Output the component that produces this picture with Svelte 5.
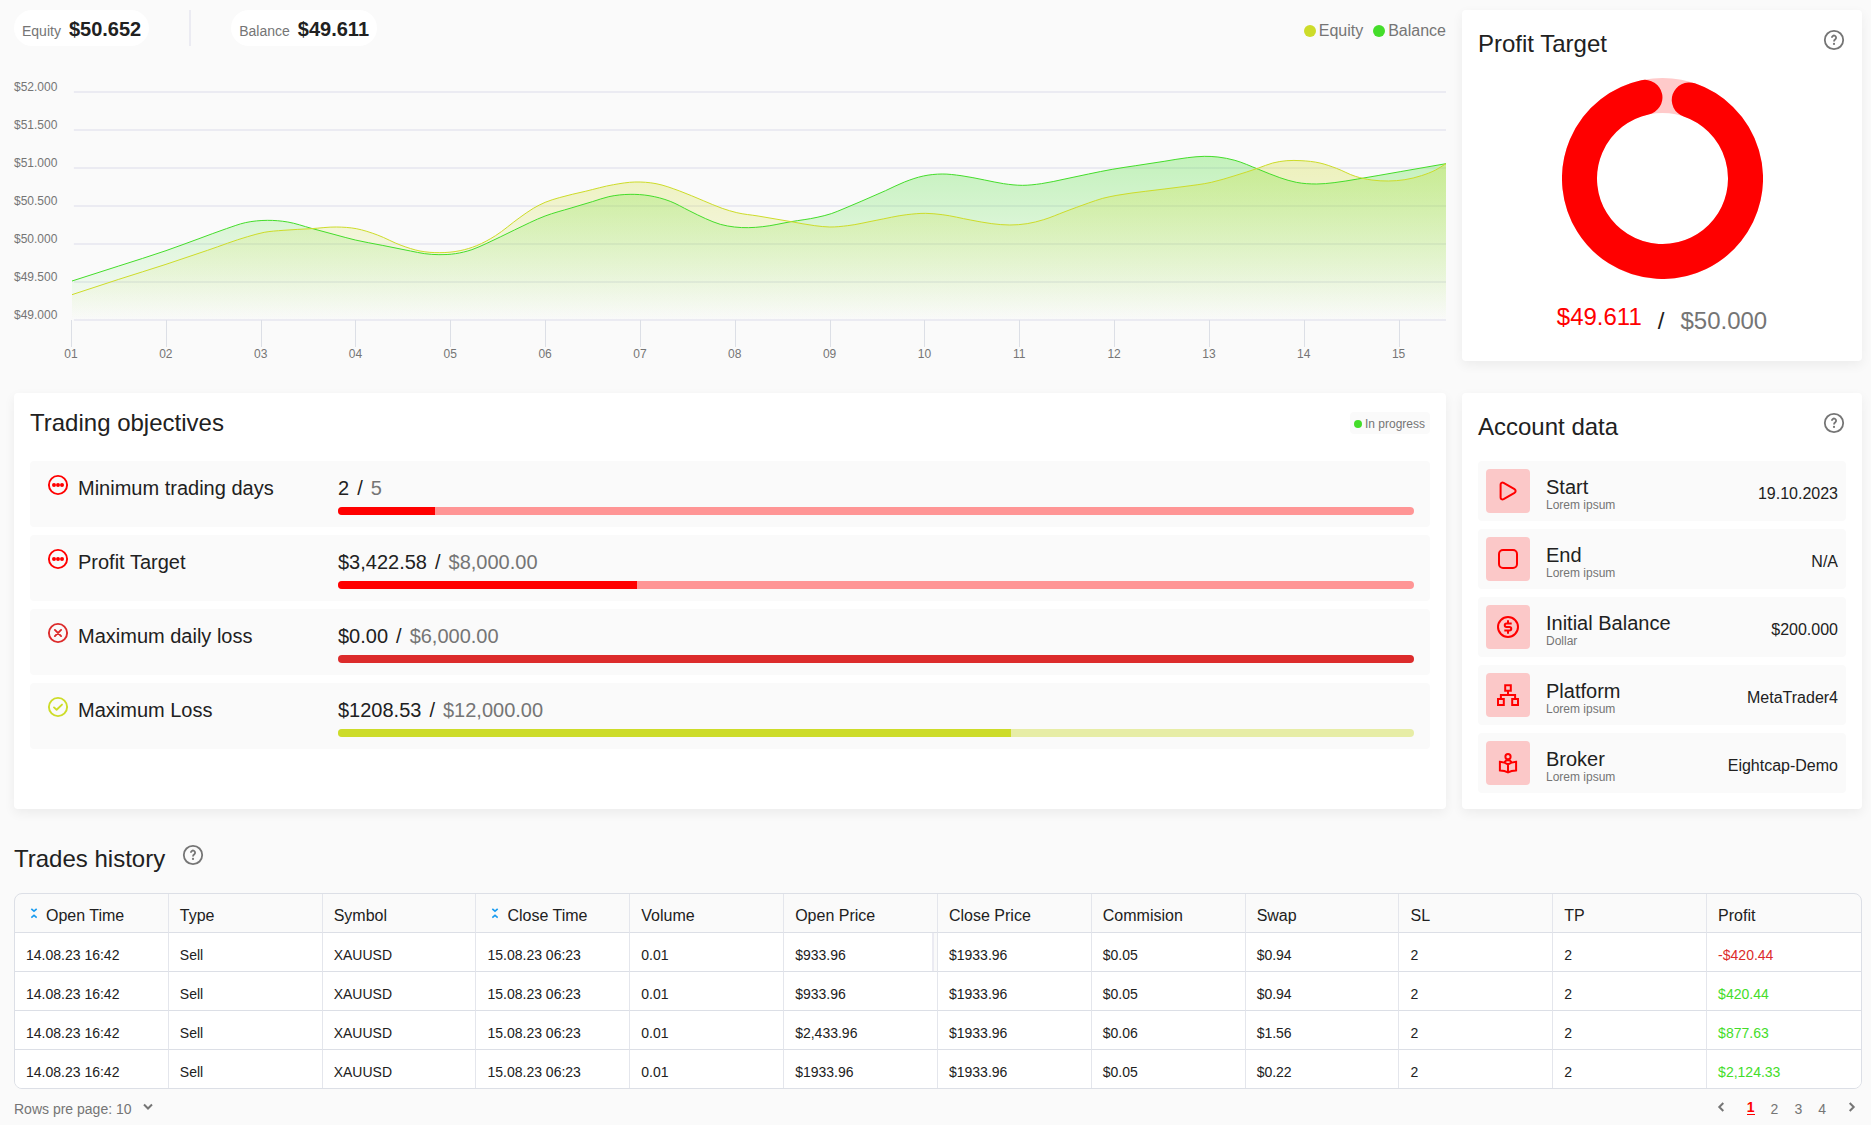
<script lang="ts">
  type Point = [number, number];

  const yLabels = ['$52.000', '$51.500', '$51.000', '$50.500', '$50.000', '$49.500', '$49.000'];
  const days = Array.from({ length: 15 }, (_, i) => String(i + 1).padStart(2, '0'));

  const balance: Point[] = [
    [153, 843], [252, 798], [352, 752], [420, 717], [480, 686], [520, 668], [567, 661], [610, 666],
    [660, 685], [710, 704], [753, 720], [810, 736], [870, 753], [900, 761], [930, 764], [965, 761],
    [1000, 749], [1030, 731], [1090, 690], [1155, 648], [1210, 624], [1255, 605], [1290, 590],
    [1335, 583], [1375, 587], [1420, 604], [1460, 632], [1495, 656], [1526, 673], [1556, 681],
    [1586, 683], [1616, 680], [1676, 665], [1731, 652], [1761, 641], [1786, 627], [1826, 603],
    [1876, 572], [1916, 546], [1956, 528], [1996, 522], [2036, 527], [2086, 540], [2126, 551],
    [2166, 556], [2206, 551], [2256, 537], [2306, 522], [2356, 508], [2406, 497], [2466, 484],
    [2516, 473], [2551, 469], [2580, 471], [2616, 481], [2666, 508], [2711, 533], [2746, 547],
    [2789, 552], [2826, 548], [2876, 537], [2966, 515], [3063, 491]
  ];

  const equity: Point[] = [
    [153, 884], [252, 838], [352, 793], [440, 751], [525, 710], [560, 697], [600, 691], [660, 686],
    [713, 681], [755, 686], [800, 705], [850, 736], [890, 753], [932, 758], [975, 752], [1010, 737],
    [1050, 707], [1100, 654], [1130, 625], [1155, 607], [1185, 593], [1240, 574], [1300, 554],
    [1345, 546], [1390, 551], [1440, 573], [1490, 602], [1530, 625], [1561, 638], [1606, 648],
    [1676, 665], [1726, 677], [1758, 681], [1796, 677], [1856, 661], [1921, 644], [1961, 640],
    [1996, 644], [2056, 660], [2101, 671], [2139, 675], [2176, 671], [2211, 659], [2256, 635],
    [2306, 609], [2336, 595], [2366, 586], [2426, 574], [2506, 560], [2566, 547], [2616, 527],
    [2666, 504], [2696, 489], [2726, 482], [2756, 482], [2796, 489], [2831, 505], [2871, 529],
    [2906, 540], [2941, 543], [2976, 539], [3011, 527], [3041, 510], [3063, 491]
  ];

  // Cubic segments whose tangents are weighted by the spacing of neighbouring points
  function curve(points: Point[]): string {
    const last = points.length - 1;
    const slope = (i: number) => (points[i + 1][1] - points[i][1]) / (points[i + 1][0] - points[i][0]);
    const tangents = points.map((p, i) => {
      if (i === 0) return slope(0);
      if (i === last) return slope(last - 1);
      const before = p[0] - points[i - 1][0];
      const after = points[i + 1][0] - p[0];
      return (slope(i - 1) * after + slope(i) * before) / (before + after);
    });
    let d = `M${points[0][0]} ${points[0][1]}`;
    for (let i = 0; i < last; i++) {
      const [x1, y1] = points[i];
      const [x2, y2] = points[i + 1];
      const h = (x2 - x1) / 3;
      d += `C${x1 + h} ${y1 + h * tangents[i]} ${x2 - h} ${y2 - h * tangents[i + 1]} ${x2} ${y2}`;
    }
    return d;
  }

  const balanceLine = curve(balance);
  const equityLine = curve(equity);

  // Profit ring: angles run clockwise from the top
  const at = (deg: number) => {
    const a = (deg * Math.PI) / 180;
    return `${100.5 + 83 * Math.sin(a)} ${100.5 - 83 * Math.cos(a)}`;
  };
  const ring = `M${at(18.8)}A83 83 0 1 1 ${at(347.8)}`;

  const objectives = [
    { icon: 'dots', name: 'Minimum trading days', value: '2', target: '5', pct: 9, tone: 'red' },
    { icon: 'dots', name: 'Profit Target', value: '$3,422.58', target: '$8,000.00', pct: 27.8, tone: 'red' },
    { icon: 'cross', name: 'Maximum daily loss', value: '$0.00', target: '$6,000.00', pct: 100, tone: 'fail' },
    { icon: 'check', name: 'Maximum Loss', value: '$1208.53', target: '$12,000.00', pct: 62.5, tone: 'lime' }
  ];

  const account = [
    { icon: 'play', name: 'Start', note: 'Lorem ipsum', value: '19.10.2023' },
    { icon: 'stop', name: 'End', note: 'Lorem ipsum', value: 'N/A' },
    { icon: 'dollar', name: 'Initial Balance', note: 'Dollar', value: '$200.000' },
    { icon: 'tree', name: 'Platform', note: 'Lorem ipsum', value: 'MetaTrader4' },
    { icon: 'reader', name: 'Broker', note: 'Lorem ipsum', value: 'Eightcap-Demo' }
  ];

  const columns = ['Open Time', 'Type', 'Symbol', 'Close Time', 'Volume', 'Open Price', 'Close Price', 'Commision', 'Swap', 'SL', 'TP', 'Profit'];
  const sortable = ['Open Time', 'Close Time'];
  const trades = [
    ['14.08.23 16:42', 'Sell', 'XAUUSD', '15.08.23 06:23', '0.01', '$933.96', '$1933.96', '$0.05', '$0.94', '2', '2', '-$420.44'],
    ['14.08.23 16:42', 'Sell', 'XAUUSD', '15.08.23 06:23', '0.01', '$933.96', '$1933.96', '$0.05', '$0.94', '2', '2', '$420.44'],
    ['14.08.23 16:42', 'Sell', 'XAUUSD', '15.08.23 06:23', '0.01', '$2,433.96', '$1933.96', '$0.06', '$1.56', '2', '2', '$877.63'],
    ['14.08.23 16:42', 'Sell', 'XAUUSD', '15.08.23 06:23', '0.01', '$1933.96', '$1933.96', '$0.05', '$0.22', '2', '2', '$2,124.33']
  ];
  const pages = [1, 2, 3, 4];
  let page = $state(1);
</script>

{#snippet help(label: string)}
  <button class="help" type="button" aria-label={label}>
    <svg viewBox="0 0 24 24" width="24" height="24" fill="none" stroke="currentColor" stroke-width="1.8">
      <circle cx="12" cy="12" r="9.2" />
      <path d="M9.9 9.7a2.100 2.100 0 1 1 3.400 1.600c-.8.6-1.300 1-1.300 2.100" />
      <circle cx="12" cy="15.900" r="1.100" fill="currentColor" stroke="none" />
    </svg>
  </button>
{/snippet}

<main>
  <div class="panels">
    <section class="chart" aria-label="Equity and balance">
      <header class="summary">
        <div class="pill"><span>Equity</span><strong>$50.652</strong></div>
        <div class="divider"></div>
        <div class="pill"><span>Balance</span><strong>$49.611</strong></div>
        <ul class="legend">
          <li class="equity">Equity</li>
          <li class="balance">Balance</li>
        </ul>
      </header>
      <div class="graph">
        <ul class="y-axis">
          {#each yLabels as label}<li>{label}</li>{/each}
        </ul>
        <div class="plot">
          <svg viewBox="153 276 2910 684" preserveAspectRatio="none" fill="none" aria-hidden="true">
            <defs>
              <linearGradient id="balance-fill" x1="0" y1="0" x2="0" y2="1">
                <stop offset="0" stop-color="#44dd2a" stop-opacity=".3" />
                <stop offset="1" stop-color="#44dd2a" stop-opacity="0" />
              </linearGradient>
              <linearGradient id="equity-fill" x1="0" y1="0" x2="0" y2="1">
                <stop offset="0" stop-color="#cddc29" stop-opacity=".3" />
                <stop offset="1" stop-color="#cddc29" stop-opacity="0" />
              </linearGradient>
            </defs>
            {#each yLabels as _, i}
              <line class="gridline" x1="157" x2="3063" y1={276 + i * 114} y2={276 + i * 114} />
            {/each}
            <path d="{balanceLine}V960H153Z" fill="url(#balance-fill)" />
            <path d="{equityLine}V960H153Z" fill="url(#equity-fill)" />
            <path class="line" d={balanceLine} stroke="#44dd2a" />
            <path class="line" d={equityLine} stroke="#cddc29" />
          </svg>
          <ul class="x-axis">
            {#each days as day}<li><span>{day}</span></li>{/each}
          </ul>
        </div>
      </div>
    </section>

    <section class="card profit">
      <header class="head">
        <h2>Profit Target</h2>
        {@render help('About profit target')}
      </header>
      <svg class="ring" viewBox="0 0 201 201" width="201" height="201" fill="none" stroke-width="35" aria-hidden="true">
        <circle cx="100.5" cy="100.5" r="83" stroke="#ffcaca" />
        <path d={ring} stroke="#ff0000" stroke-linecap="round" />
      </svg>
      <p class="totals"><span class="current">$49.611</span><span class="low">/</span><span class="low goal">$50.000</span></p>
    </section>

    <section class="card">
      <header class="head raised">
        <h2>Trading objectives</h2>
        <span class="badge">In progress</span>
      </header>
      <ul class="objectives">
        {#each objectives as item}
          <li class={item.tone}>
            <svg viewBox="0 0 24 24" width="24" height="24" fill="none" stroke="currentColor" stroke-width="1.9" stroke-linecap="round" stroke-linejoin="round" aria-hidden="true">
              <circle cx="12" cy="12" r="9.1" />
              {#if item.icon === 'dots'}
                <g fill="currentColor" stroke="none">
                  <circle cx="8" cy="12" r="2" /><circle cx="12" cy="12" r="2" /><circle cx="16" cy="12" r="2" />
                </g>
              {:else if item.icon === 'cross'}
                <path d="M8.900 8.900l6.200 6.200M15.100 8.900l-6.200 6.200" />
              {:else}
                <path d="M8 12.400l2.600 2.400 5.400-5.200" />
              {/if}
            </svg>
            <span class="name">{item.name}</span>
            <div class="progress">
              <p><span>{item.value}</span><span>/</span><span class="target">{item.target}</span></p>
              <div class="bar" role="progressbar" aria-label={item.name} aria-valuenow={item.pct}>
                <div class="fill" style="width: {item.pct}%"></div>
              </div>
            </div>
          </li>
        {/each}
      </ul>
    </section>

    <section class="card">
      <header class="head">
        <h2>Account data</h2>
        {@render help('About account data')}
      </header>
      <ul class="account">
        {#each account as item}
          <li>
            <span class="tile">
              <svg viewBox="0 0 24 24" width="24" height="24" fill="none" stroke="currentColor" stroke-width="2" aria-hidden="true">
                {#if item.icon === 'play'}
                  <path d="M4.600 5.600v12.800c0 1.800 1.500 2.500 3 1.700l10.900-6.200c1.500-.9 1.500-2.900 0-3.800L7.600 3.900c-1.500-.8-3-.1-3 1.700z" />
                {:else if item.icon === 'stop'}
                  <rect x="3" y="3" width="18" height="18" rx="4" />
                {:else if item.icon === 'dollar'}
                  <circle cx="12" cy="12" r="10" />
                  <path d="M15.700 8.500h-5.200a1.700 1.700 0 0 0 0 3.500h3a1.700 1.700 0 0 1 0 3.500H8.300M12 5.200v3.300M12 15.500v3.300" />
                {:else if item.icon === 'tree'}
                  <path d="M9.200 2.200h5.600v5.600H9.200zM2 16h5.800v6H2zM16.200 16H22v6h-5.800zM12 7.800v4M4.900 16v-4h14.200v4" />
                {:else}
                  <circle cx="12" cy="5.700" r="2.600" />
                  <path d="M12 13.400C9.800 11.700 7 10.900 3.900 10.700v8.700c3 .1 5.800.7 8.100 2 2.300-1.300 5.100-1.900 8.100-2v-8.700c-3.100.2-5.900 1-8.100 2.700zM12 13.400v8M8.700 10.900c1.200-2.100 5.400-2.100 6.600 0" />
                {/if}
              </svg>
            </span>
            <div class="text">
              <span class="title">{item.name}</span>
              <span class="note">{item.note}</span>
            </div>
            <span class="value">{item.value}</span>
          </li>
        {/each}
      </ul>
    </section>
  </div>

  <section class="history">
    <header class="history-head">
      <h2>Trades history</h2>
      {@render help('About trades history')}
    </header>
    <div class="table-box">
      <table>
        <thead>
          <tr>
            {#each columns as column}
              <th scope="col">
                {#if sortable.includes(column)}
                  <button class="sort" type="button">
                    <svg viewBox="0 0 16 16" width="16" height="16" fill="none" stroke="#1a9cf0" stroke-width="1.6" aria-hidden="true">
                      <path d="M5.300 3.800L8 6.200l2.700-2.400M5.300 12.700L8 10.300l2.700 2.400" />
                    </svg>
                    <span>{column}</span>
                  </button>
                {:else}
                  <span>{column}</span>
                {/if}
              </th>
            {/each}
          </tr>
        </thead>
        <tbody>
          {#each trades as trade, row}
            <tr>
              {#each trade as cell, i}
                <td
                  class:loss={i === 11 && cell.startsWith('-')}
                  class:gain={i === 11 && !cell.startsWith('-')}
                  class:handle={row === 0 && i === 5}>{cell}</td>
              {/each}
            </tr>
          {/each}
        </tbody>
      </table>
    </div>
    <footer>
      <div class="per-page">
        <label for="rows">Rows pre page:</label>
        <div class="select">
          <select id="rows"><option>10</option><option>25</option><option>50</option></select>
          <svg viewBox="0 0 16 16" width="16" height="16" fill="none" stroke="currentColor" stroke-width="2" aria-hidden="true"><path d="M4 5.500l4 4 4-4" /></svg>
        </div>
      </div>
      <nav aria-label="Pages">
        <button type="button" class="arrow" aria-label="Previous page" onclick={() => (page = Math.max(1, page - 1))}>
          <svg viewBox="0 0 20 20" width="20" height="20" fill="none" stroke="currentColor" stroke-width="2"><path d="M12.300 6l-4 4 4 4" /></svg>
        </button>
        {#each pages as n}
          <button type="button" class="page" class:active={n === page} onclick={() => (page = n)}>{n}</button>
        {/each}
        <button type="button" class="arrow" aria-label="Next page" onclick={() => (page = Math.min(4, page + 1))}>
          <svg viewBox="0 0 20 20" width="20" height="20" fill="none" stroke="currentColor" stroke-width="2"><path d="M7.700 6l4 4-4 4" /></svg>
        </button>
      </nav>
    </footer>
  </section>
</main>

<style>
  :global(body) {
    background: #fafafa;
  }
  main {
    padding: 10px 9px 0 14px;
    color: #212121;
    font-family: "Liberation Sans", Arial, Helvetica, sans-serif;
    font-size: 14px;
  }
  main :is(h2, p, ul) {
    margin: 0;
    padding: 0;
    list-style: none;
  }
  button,
  select {
    margin: 0;
    padding: 0;
    border: 0;
    background: none;
    color: inherit;
    font: inherit;
    cursor: pointer;
  }
  svg {
    display: block;
    flex: none;
  }
  h2 {
    font-size: 24px;
    line-height: 28px;
    font-weight: 400;
  }
  .help {
    color: #757575;
  }
  .panels {
    display: grid;
    grid-template-columns: minmax(0, 1fr) 400px;
    gap: 32px 16px;
  }

  .summary {
    display: flex;
    align-items: center;
    gap: 40px;
    height: 36px;
    margin-bottom: 34px;
  }
  .pill {
    display: flex;
    align-items: baseline;
    gap: 8px;
    height: 36px;
    padding: 0 8px;
    border-radius: 18px;
    background: #fff;
    line-height: 38px;
  }
  .pill span {
    color: #757575;
  }
  .pill strong {
    font-size: 20px;
  }
  .divider {
    width: 2px;
    height: 36px;
    background: #ebebf2;
  }
  .legend {
    display: flex;
    gap: 10px;
    color: #757575;
    font-size: 16px;
    line-height: 20px;
  }
  .summary .legend {
    margin-left: auto;
    padding-top: 5px;
  }
  .legend li {
    display: flex;
    align-items: center;
    gap: 3px;
  }
  .legend li::before {
    content: "";
    width: 12px;
    height: 12px;
    border-radius: 50%;
  }
  .equity::before {
    background: #cddc29;
  }
  .balance::before {
    background: #44dd2a;
  }
  .graph {
    display: flex;
    color: #757575;
    font-size: 12px;
    line-height: 14px;
  }
  .y-axis {
    width: 58px;
    flex: none;
  }
  .y-axis li {
    height: 38px;
  }
  .plot {
    flex: 1;
    min-width: 0;
    padding-top: 12px;
  }
  .plot svg {
    width: 100%;
    height: 228px;
    overflow: visible;
  }
  .gridline {
    stroke: #ebebf2;
    stroke-width: 2px;
    vector-effect: non-scaling-stroke;
  }
  .line {
    stroke-width: 1px;
    vector-effect: non-scaling-stroke;
  }
  .plot .x-axis {
    display: grid;
    grid-template-columns: repeat(14, 2fr) 1fr;
    margin-left: -1px;
  }
  .x-axis li::before {
    content: "";
    display: block;
    width: 1px;
    height: 27px;
    background: #dcdfe6;
  }
  .x-axis span {
    display: block;
    width: 16px;
    margin-left: -8px;
    text-align: center;
  }

  .card {
    padding: 16px;
    border-radius: 4px;
    background: #fff;
    box-shadow: 0 4px 12px rgba(0, 0, 0, 0.06);
  }
  .head {
    display: flex;
    justify-content: space-between;
    align-items: flex-start;
    height: 52px;
  }
  .head h2 {
    padding-top: 4px;
  }
  .head .help {
    margin-top: 2px;
  }
  .raised h2 {
    padding-top: 0;
  }
  .badge {
    display: flex;
    align-items: center;
    gap: 3px;
    margin-top: 3px;
    padding: 2px 5px 0 4px;
    border-radius: 4px;
    background: #fafafa;
    color: #757575;
    font-size: 12px;
    line-height: 20px;
  }
  .badge::before {
    content: "";
    width: 8px;
    height: 8px;
    border-radius: 50%;
    background: #44dd2a;
  }
  .ring {
    margin: 0 auto;
  }
  .totals {
    display: flex;
    justify-content: center;
    align-items: flex-start;
    gap: 16px;
    font-size: 24px;
    line-height: 28px;
  }
  .profit .totals {
    padding: 24px 0 10px;
  }
  .current {
    color: #f00;
  }
  .low {
    padding-top: 4px;
  }
  .goal,
  .target {
    color: #757575;
  }

  .objectives,
  .account {
    display: flex;
    flex-direction: column;
    gap: 8px;
  }
  .objectives li {
    display: flex;
    gap: 8px;
    padding: 12px 16px;
    border-radius: 4px;
    background: #fafafa;
    font-size: 20px;
    line-height: 22px;
  }
  .name {
    flex: none;
    width: 252px;
    padding-top: 4px;
  }
  .progress {
    flex: 1;
    padding-top: 4px;
  }
  .progress p {
    display: flex;
    gap: 8px;
  }
  .bar {
    height: 8px;
    margin-top: 8px;
    border-radius: 4px;
    overflow: hidden;
  }
  .fill {
    height: 100%;
  }
  .red svg {
    color: #f00;
  }
  .red .bar {
    background: #ff9595;
  }
  .red .fill {
    background: #f00;
  }
  .fail svg {
    color: #dc2b2b;
  }
  .fail .fill {
    background: #dc2b2b;
  }
  .lime svg {
    color: #cddc29;
  }
  .lime .bar {
    background: #e7eda6;
  }
  .lime .fill {
    background: #cddc29;
  }

  .account li {
    display: flex;
    align-items: center;
    padding: 8px;
    border-radius: 4px;
    background: #fafafa;
  }
  .tile {
    display: grid;
    place-items: center;
    width: 44px;
    height: 44px;
    margin-right: 16px;
    border-radius: 4px;
    background: #fbc8c8;
    color: #f00;
  }
  .text {
    display: flex;
    flex-direction: column;
    flex: 1;
    padding-top: 7px;
  }
  .title {
    font-size: 20px;
    line-height: 22px;
  }
  .note {
    color: #757575;
    font-size: 12px;
    line-height: 15px;
  }
  .value {
    padding-top: 5px;
    font-size: 16px;
    line-height: 18px;
  }

  .history-head {
    display: flex;
    align-items: flex-start;
    gap: 16px;
    padding: 34px 0 20px;
  }
  .history-head h2 {
    padding-top: 2px;
  }
  .table-box {
    border: 1px solid #dcdfe6;
    border-radius: 8px;
    overflow: hidden;
  }
  table {
    width: 100%;
    border-collapse: separate;
    border-spacing: 0;
    table-layout: fixed;
  }
  th,
  td {
    height: 33px;
    padding: 5px 0 0 11px;
    border-right: 1px solid #e4e6ec;
    text-align: left;
    font-weight: 400;
  }
  th {
    height: 32px;
    padding-top: 6px;
    font-size: 16px;
    line-height: 18px;
  }
  th:last-child,
  td:last-child {
    border-right: 0;
  }
  td {
    border-top: 1px solid #dcdfe6;
    background: #fff;
    line-height: 16px;
  }
  .sort {
    display: flex;
    gap: 4px;
  }
  .sort svg {
    margin-top: -2px;
  }
  .loss {
    color: #dc2b2b;
  }
  .gain {
    color: #44dd2a;
  }
  .handle {
    position: relative;
  }
  .handle::after {
    content: "";
    position: absolute;
    top: 0;
    right: 0;
    bottom: 0;
    width: 3px;
    border-left: 2px solid #ebebf2;
    background: #fafafa;
  }
  footer {
    display: flex;
    justify-content: space-between;
    align-items: flex-start;
    padding-top: 8px;
    color: #757575;
    line-height: 16px;
  }
  .per-page {
    display: flex;
    gap: 4px;
    padding-top: 4px;
  }
  .select {
    position: relative;
    display: flex;
  }
  .select select {
    width: 40px;
    height: 16px;
    appearance: none;
  }
  .select svg {
    position: absolute;
    right: 0;
    top: -2px;
    pointer-events: none;
  }
  nav {
    display: flex;
    align-items: flex-start;
    gap: 16px;
  }
  .page {
    padding-top: 4px;
    line-height: 16px;
  }
  .active {
    padding-top: 3px;
    border-bottom: 1px solid #f00;
    color: #f00;
    font-weight: 700;
    line-height: 14px;
  }
</style>
